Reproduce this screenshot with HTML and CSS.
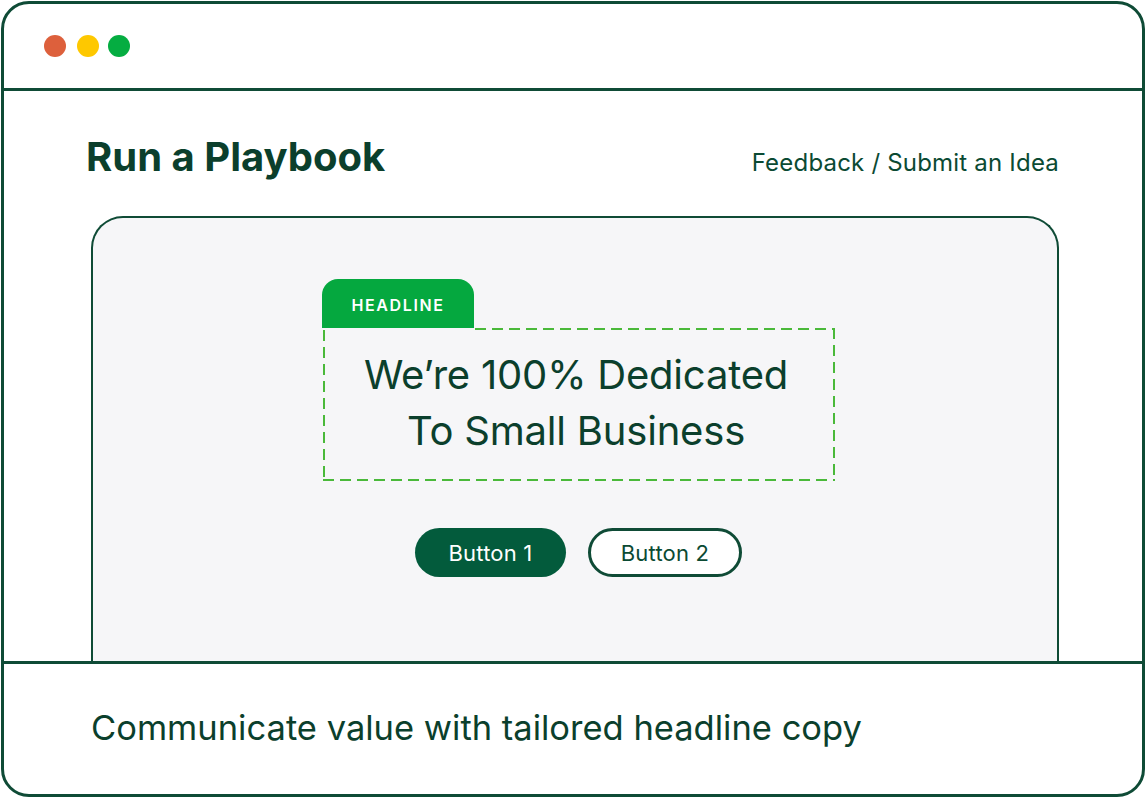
FILE: index.html
```html
<!DOCTYPE html>
<html lang="en">
<head>
<meta charset="utf-8">
<title>Run a Playbook</title>
<link rel="stylesheet" href="styles.css">
</head>
<body>
<div class="window">
  <div class="titlebar">
    <span class="dot dot-red"></span>
    <span class="dot dot-yellow"></span>
    <span class="dot dot-green"></span>
  </div>
  <div class="main">
    <div class="header">
      <h1 class="title">Run a Playbook</h1>
      <a class="feedback" href="#">Feedback / Submit an Idea</a>
    </div>
    <div class="card">
      <div class="block">
        <div class="tag">HEADLINE</div>
        <div class="headline-box">
          <p class="headline">We’re 100% Dedicated<br>To Small Business</p>
        </div>
      </div>
      <div class="buttons">
        <button class="btn btn-primary">Button 1</button>
        <button class="btn btn-outline">Button 2</button>
      </div>
    </div>
  </div>
  <div class="footer">
    <p class="caption">Communicate value with tailored headline copy</p>
  </div>
</div>
</body>
</html>
```

FILE: styles.css
```css
* { box-sizing: border-box; }

html, body {
  margin: 0;
  padding: 0;
  background: #ffffff;
}

body {
  font-family: Inter, "Noto Sans", "Liberation Sans", sans-serif;
  color: #0b3f2c;
}

.window {
  margin: 1px 0 0 1px;
  width: 1144px;
  height: 796px;
  border: 3px solid #0f4b36;
  border-radius: 28px;
  display: flex;
  flex-direction: column;
  overflow: hidden;
}

.titlebar {
  height: 87px;
  flex: none;
  border-bottom: 3px solid #0f4b36;
  display: flex;
  align-items: center;
  padding: 0 0 0 40px;
  gap: 11px;
}

.dot {
  width: 22px;
  height: 22px;
  border-radius: 50%;
  display: block;
}
.dot-red { background: #dd603c; }
.dot-yellow { background: #fec800; }
.dot-green { background: #05ad41; margin-left: -2px; }

.main {
  flex: 1;
  display: flex;
  flex-direction: column;
  padding: 0 83px 0 87px;
  border-bottom: 3px solid #0f4b36;
}

.header {
  height: 125px;
  flex: none;
  display: flex;
  align-items: center;
  justify-content: space-between;
}

.title {
  margin: 6px 0 0 -5px;
  font-size: 40px;
  font-weight: 700;
  letter-spacing: 0;
  color: #0b3f2c;
}

.feedback {
  margin-top: 17px;
  font-size: 24px;
  font-weight: 400;
  letter-spacing: 0.2px;
  color: #0b4a33;
  text-decoration: none;
}

.card {
  flex: 1;
  background: #f6f6f8;
  border: 2px solid #0f4b36;
  border-bottom: none;
  border-radius: 32px 32px 0 0;
  display: flex;
  flex-direction: column;
  align-items: center;
  padding: 61px 0 0 7px;
}

.block {
  display: flex;
  flex-direction: column;
  align-items: flex-start;
}

.tag {
  width: 152px;
  height: 49px;
  background: #05a83f;
  color: #ffffff;
  border-radius: 16px 16px 0 0;
  font-size: 16px;
  font-weight: 600;
  letter-spacing: 1.6px;
  display: flex;
  align-items: center;
  justify-content: center;
  padding-top: 2px;
}

.headline-box {
  margin-left: 1px;
  width: 512px;
  height: 153px;
  display: flex;
  align-items: center;
  justify-content: center;
  padding: 0 6px 4px 0;
  background:
    repeating-linear-gradient(90deg, #4ab93a 0 11px, transparent 11px 17px) left 152px top / calc(100% - 152px) 2px no-repeat,
    repeating-linear-gradient(90deg, #4ab93a 0 11px, transparent 11px 17px) left bottom / 100% 2px no-repeat,
    repeating-linear-gradient(180deg, #4ab93a 0 11px, transparent 11px 17px) left top 2px / 2px 100% no-repeat,
    repeating-linear-gradient(180deg, #4ab93a 0 11px, transparent 11px 17px) right top / 2px 100% no-repeat;
}

.headline {
  margin: 0;
  text-align: center;
  font-size: 40px;
  line-height: 56px;
  font-weight: 400;
  letter-spacing: -0.2px;
  color: #0b3f2c;
}

.buttons {
  margin-top: 47px;
  display: flex;
  gap: 22px;
}

.btn {
  height: 49px;
  border-radius: 25px;
  font-family: inherit;
  font-size: 22px;
  font-weight: 400;
  letter-spacing: 0.2px;
  padding: 0;
  cursor: pointer;
}

.btn-primary {
  width: 151px;
  background: #035b3c;
  color: #ffffff;
  border: none;
}

.btn-outline {
  width: 154px;
  background: #ffffff;
  color: #0b4a33;
  border: 3px solid #0f4b36;
}

.footer {
  height: 130px;
  flex: none;
  display: flex;
  align-items: center;
  padding: 0 0 0 87px;
}

.caption {
  margin: -4px 0 0 0;
  font-size: 34.5px;
  font-weight: 400;
  letter-spacing: 0;
  color: #0b3f2c;
}
```
